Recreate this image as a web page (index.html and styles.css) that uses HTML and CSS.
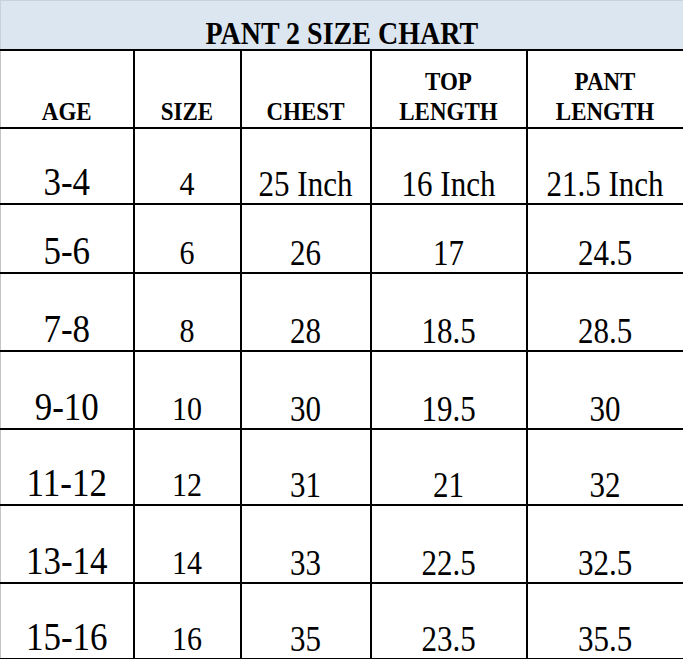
FILE: index.html
```html
<!DOCTYPE html>
<html>
<head>
<meta charset="utf-8">
<title>Pant 2 Size Chart</title>
<link rel="stylesheet" href="styles.css">
</head>
<body>
<table class="chart">
  <colgroup>
    <col class="c-age">
    <col class="c-size">
    <col class="c-chest">
    <col class="c-top">
    <col class="c-pant">
  </colgroup>
  <tr class="r-title">
    <td class="title" colspan="5"><span class="t">PANT 2 SIZE CHART</span></td>
  </tr>
  <tr class="r-head">
    <th class="first"><span class="t">AGE</span></th>
    <th><span class="t">SIZE</span></th>
    <th><span class="t">CHEST</span></th>
    <th><span class="t">TOP<br>LENGTH</span></th>
    <th><span class="t">PANT<br>LENGTH</span></th>
  </tr>
  <tr class="r-a">
    <td class="first age"><span class="t">3-4</span></td><td class="size"><span class="t">4</span></td><td><span class="t">25 Inch</span></td><td><span class="t">16 Inch</span></td><td><span class="t">21.5 Inch</span></td>
  </tr>
  <tr class="r-b">
    <td class="first age"><span class="t">5-6</span></td><td class="size"><span class="t">6</span></td><td><span class="t">26</span></td><td><span class="t">17</span></td><td><span class="t">24.5</span></td>
  </tr>
  <tr class="r-c">
    <td class="first age"><span class="t">7-8</span></td><td class="size"><span class="t">8</span></td><td><span class="t">28</span></td><td><span class="t">18.5</span></td><td><span class="t">28.5</span></td>
  </tr>
  <tr class="r-c">
    <td class="first age"><span class="t">9-10</span></td><td class="size"><span class="t">10</span></td><td><span class="t">30</span></td><td><span class="t">19.5</span></td><td><span class="t">30</span></td>
  </tr>
  <tr class="r-a">
    <td class="first age"><span class="t">11-12</span></td><td class="size"><span class="t">12</span></td><td><span class="t">31</span></td><td><span class="t">21</span></td><td><span class="t">32</span></td>
  </tr>
  <tr class="r-c">
    <td class="first age"><span class="t">13-14</span></td><td class="size"><span class="t">14</span></td><td><span class="t">33</span></td><td><span class="t">22.5</span></td><td><span class="t">32.5</span></td>
  </tr>
  <tr class="r-a">
    <td class="first age"><span class="t">15-16</span></td><td class="size"><span class="t">16</span></td><td><span class="t">35</span></td><td><span class="t">23.5</span></td><td><span class="t">35.5</span></td>
  </tr>
</table>
</body>
</html>
```
FILE: styles.css
```css
html, body {
  margin: 0;
  padding: 0;
  background: #ffffff;
}

.chart {
  border-collapse: collapse;
  table-layout: fixed;
  width: 683px;
  font-family: "Liberation Serif", "Times New Roman", serif;
  color: #000;
}

.c-age { width: 133px; }
.c-size { width: 107px; }
.c-chest { width: 130px; }
.c-top { width: 156px; }
.c-pant { width: 157px; }

.chart td,
.chart th {
  border: 2px solid #000;
  text-align: center;
  vertical-align: bottom;
  padding: 0;
}

.chart .first {
  border-left: 1px solid #c4c4c4;
}

.t {
  display: inline-block;
  transform: scaleY(1.13);
  transform-origin: 50% 100%;
}

.r-title { height: 49px; }
.r-head { height: 78px; }
.r-a { height: 76px; }
.r-b { height: 69px; }
.r-c { height: 78px; }

.chart .title {
  background: #dce6f1;
  border-top: 1px solid #c9d2dc;
  border-left: 1px solid #c9d2dc;
  font-weight: bold;
  font-size: 28px;
  line-height: 26px;
  padding-bottom: 0;
}

.chart th {
  font-weight: bold;
  font-size: 23px;
  line-height: 27px;
  padding-bottom: 0;
}

.chart td {
  font-size: 31px;
  line-height: 32px;
  padding-bottom: 0;
}

.chart td.age {
  font-size: 35px;
  line-height: 36px;
  padding-bottom: 0;
}

.chart td.size {
  font-size: 30px;
  line-height: 31px;
  padding-bottom: 2px;
}
```
